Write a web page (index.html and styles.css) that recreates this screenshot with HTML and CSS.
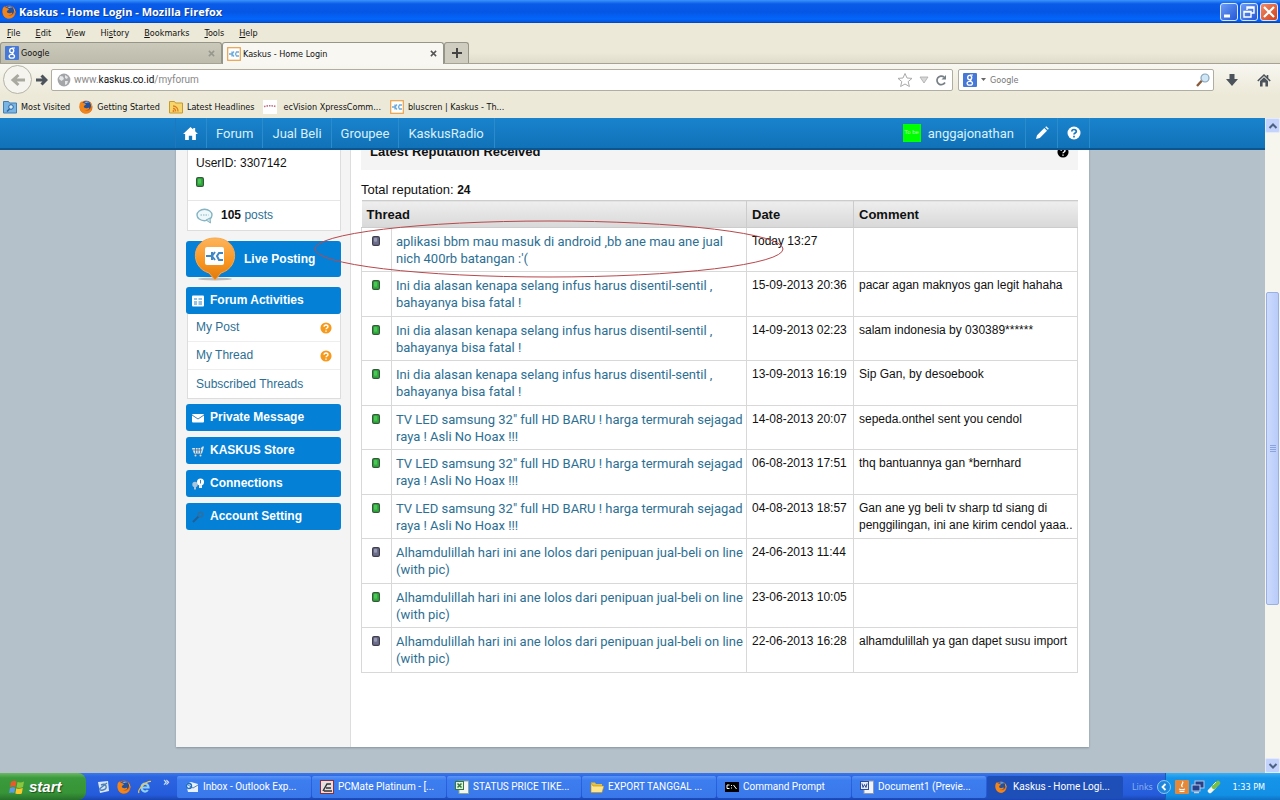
FILE: index.html
```html
<!DOCTYPE html>
<html lang="en">
<head>
<meta charset="utf-8">
<title>Kaskus - Home Login</title>
<link rel="stylesheet" href="styles.css">
</head>
<body>
<svg class="defs" aria-hidden="true">
  <linearGradient id="g-pin" x1="0" y1="0" x2="0" y2="1"><stop offset="0" stop-color="#fdb45c"/><stop offset=".6" stop-color="#f7941e"/><stop offset="1" stop-color="#e0780c"/></linearGradient>
  <symbol id="firefox" viewBox="0 0 16 16"><circle cx="8" cy="8" r="7.5" fill="#e06a12"/><circle cx="8.6" cy="6.4" r="5.2" fill="#24509c"/><path d="M6 2.5c2-1.5 5-1 6 .5-2-.5-3 .5-4 .5z" fill="#7fb4e8"/><path d="M.6 5C1 3 2 2 3 1.300c0 1 .4 1.700 1 2.200C5.500 3.400 7 4 8 5c-1 1-2.500 1-2.500 2.500S8 10 10 9c1-.5 2 0 1.500 1-1 1.500-3.500 2-5 1.500 3 2 7 1 8-4C15 12 12 15.500 8 15.500S0 12 .6 5z" fill="#f0851c"/><path d="M12.500 3c2 1.500 3 4 2.700 6-1-3-1.500-4-2.700-6z" fill="#fbc93d"/></symbol>
  <symbol id="google" viewBox="0 0 14 14"><rect width="14" height="14" rx="1" fill="#4678d8"/><ellipse cx="6.700" cy="4.600" rx="2" ry="2.200" fill="none" stroke="#fff" stroke-width="1.400"/><path d="M7 2h3M7 7l1.500 1.500" stroke="#fff" stroke-width="1.200"/><ellipse cx="6.800" cy="10.300" rx="2.700" ry="1.900" fill="none" stroke="#fff" stroke-width="1.300"/></symbol>
  <symbol id="kaskus" viewBox="0 0 14 14"><rect x=".7" y=".7" width="12.600" height="12.600" fill="#fff" stroke="#e9a04c" stroke-width="1.200"/><path d="M2 7h3M5 4.500v5M5 7l2-2.500M5 7l2 2.500M12 5H9.500L8.500 7l1 2H12" stroke="#6fabdc" stroke-width="1.300" fill="none"/></symbol>
  <symbol id="pip" viewBox="0 0 8 10"><rect x=".6" y=".6" width="6.800" height="8.800" rx="1.500" fill="#2fae3d" stroke="#35573a" stroke-width="1.200"/><rect x="2" y="1.800" width="3" height="5" rx="1" fill="#4cc658"/></symbol>
  <symbol id="pip-grey" viewBox="0 0 8 10"><rect x=".6" y=".6" width="6.800" height="8.800" rx="1.500" fill="#6d6e8c" stroke="#3e3e4e" stroke-width="1.200"/><rect x="2" y="1.800" width="3" height="4" rx="1" fill="#9a9ab4"/></symbol>
  <symbol id="help" viewBox="0 0 14 14"><circle cx="7" cy="7" r="6.500" fill="currentColor"/><path d="M4.800 5.600C4.800 2.800 9.300 2.800 9.300 5.500 9.300 7 7 7 7 8.500M7 9.800v1.600" fill="none" stroke="var(--mark)" stroke-width="1.700"/></symbol>
</svg>

<header class="titlebar">
  <svg class="i14"><use href="#firefox"/></svg>
  <h1 class="title">Kaskus - Home Login - Mozilla Firefox</h1>
  <button class="wbtn" aria-label="Minimize"><svg viewBox="0 0 16 16"><path d="M3 12h6" stroke="#fff" stroke-width="3"/></svg></button>
  <button class="wbtn" aria-label="Restore"><svg viewBox="0 0 16 16"><path d="M6 6V3h7v6h-3M6 4h7M3 7.500h7V13H3zM3 8h7" stroke="#fff" stroke-width="1.400" fill="none"/></svg></button>
  <button class="wbtn close" aria-label="Close"><svg viewBox="0 0 16 16"><path d="M3 3l10 10M13 3L3 13" stroke="#fff" stroke-width="2.200"/></svg></button>
</header>

<nav class="menubar">
  <button class="menu"><u>F</u>ile</button><button class="menu"><u>E</u>dit</button><button class="menu"><u>V</u>iew</button><button class="menu">Hi<u>s</u>tory</button><button class="menu"><u>B</u>ookmarks</button><button class="menu"><u>T</u>ools</button><button class="menu"><u>H</u>elp</button>
</nav>

<div class="tabs">
  <button class="tab"><svg class="i14"><use href="#google"/></svg><span class="tab-name">Google</span><svg class="x dim" viewBox="0 0 8 8"><path d="M1 1l6 6M7 1L1 7"/></svg></button>
  <button class="tab active"><svg class="i14"><use href="#kaskus"/></svg><span class="tab-name">Kaskus - Home Login</span><svg class="x" viewBox="0 0 8 8"><path d="M1 1l6 6M7 1L1 7"/></svg></button>
  <button class="newtab" aria-label="New tab"><svg class="i10" viewBox="0 0 10 10"><path d="M5 0v10M0 5h10" stroke="#444" stroke-width="2"/></svg></button>
</div>

<div class="navbar">
  <button class="back" aria-label="Back"><svg viewBox="0 0 16 16"><path d="M15 8H4M8.500 3L3 8l5.500 5" fill="none" stroke="#a9a9a2" stroke-width="3"/></svg></button>
  <button class="fwd" aria-label="Forward"><svg viewBox="0 0 12 12"><path d="M0 6h9M5.500 1.500L10 6l-4.500 4.500" fill="none" stroke="#4d535b" stroke-width="3"/></svg></button>
  <div class="urlbar">
    <svg class="i14" viewBox="0 0 14 14"><circle cx="7" cy="7" r="6.400" fill="#a3a5a8"/><path d="M3 3l3 .5L7 6 4.500 8 2 6zM8 2l3 2-1 2-2-1zM8 8l3 0-1 3-2 1z" fill="#e6e7e8"/></svg>
    <span class="url">www.<b>kaskus.co.id</b>/myforum</span>
    <svg class="star" viewBox="0 0 16 16"><path d="M8 1.500l2 4.500 5 .4-3.800 3.200L12.400 14.500 8 12l-4.400 2.500L4.800 9.600 1 6.400 6 6z" fill="#fff" stroke="#aaa"/></svg>
    <svg class="i10" viewBox="0 0 10 10"><path d="M1 2h8L5 8z" fill="#d8d8d8" stroke="#aaa" stroke-width=".8"/></svg>
    <svg class="i12" viewBox="0 0 12 12"><path d="M10 8.500A4.300 4.300 0 1 1 9 3" fill="none" stroke="#777f86" stroke-width="1.700"/><path d="M11 1v4.500H6.500z" fill="#777f86"/></svg>
  </div>
  <div class="search">
    <svg class="i14"><use href="#google"/></svg>
    <svg class="caret" viewBox="0 0 5 3"><path d="M0 0h5L2.500 3z" fill="#666"/></svg>
    <input class="search-input" type="text" placeholder="Google" aria-label="Search">
    <svg class="i14" viewBox="0 0 14 14"><path d="M1 13l5-5.500" stroke="#8a5a3a" stroke-width="2.400"/><circle cx="9" cy="5" r="4" fill="#cfe6f7" stroke="#8aa4b8" stroke-width="1.200"/></svg>
  </div>
  <button class="tool" aria-label="Downloads"><svg class="i14" viewBox="0 0 14 14"><path d="M4.500 1h5v5H13l-6 7-6-7h3.500z" fill="#4d535b"/></svg></button>
  <button class="tool" aria-label="Home"><svg class="i14" viewBox="0 0 14 14"><path d="M.8 8L7 2l6.200 6M10.500 2v3" fill="none" stroke="#4d535b" stroke-width="1.600"/><path d="M3 8l4-3.800L11 8v5.500H8.400V9.500H5.600v4H3z" fill="#4d535b"/></svg></button>
</div>

<nav class="bookmarks">
  <a class="bm" href="#"><svg class="i14" viewBox="0 0 14 14"><path d="M.5 1.500h5l1 1.500h7v10H.5z" fill="#78b4e4" stroke="#3f7fb8"/><circle cx="8" cy="7" r="2.300" fill="#d8edfc" stroke="#2b639c"/><path d="M6.500 9L4 11.500" stroke="#2b639c" stroke-width="1.500"/></svg>Most Visited</a>
  <a class="bm" href="#"><svg class="i14"><use href="#firefox"/></svg>Getting Started</a>
  <a class="bm" href="#"><svg class="i14" viewBox="0 0 14 14"><path d="M.5 1.500h5l1 1.500h7v10H.5z" fill="#f6d66c" stroke="#c79a2a"/><path d="M4 6a5 5 0 0 1 5 5.500M4 8.500a2.500 2.500 0 0 1 2.600 3" fill="none" stroke="#e07a1c" stroke-width="1.300"/><circle cx="4.500" cy="11" r="1" fill="#e07a1c"/></svg>Latest Headlines</a>
  <a class="bm wide" href="#"><svg class="i14" viewBox="0 0 14 14"><rect width="14" height="14" fill="#fff"/><path d="M1 6.500q6-1.500 12 0" fill="none" stroke="#c06a80" stroke-width="1.600" stroke-dasharray="1.500 1"/></svg>ecVision XpressComm...</a>
  <a class="bm" href="#"><svg class="i14"><use href="#kaskus"/></svg>bluscren | Kaskus - Th...</a>
</nav>

<main class="viewport">
  <div class="page">
    <header class="site">
      <nav class="site-in">
        <a class="nav home" href="#" aria-label="Home"><svg viewBox="0 0 16 14"><path d="M8 0L0 7.500h2.200V14h4V9.500h3.600V14h4V7.500H16L13 4.700V1h-2v1.800z" fill="#fff"/></svg></a>
        <a class="nav" href="#">Forum</a><a class="nav" href="#">Jual Beli</a><a class="nav" href="#">Groupee</a><a class="nav radio" href="#">KaskusRadio</a>
        <a class="user" href="#"><span class="avatar">To be</span>anggajonathan</a>
        <a class="nav sq" href="#" aria-label="Edit"><svg class="i14" viewBox="0 0 14 14"><path d="M1 13l1-3.800L9.300 2l2.700 2.700L4.800 12zM10.200 1.200l1-1L13.800 2.800l-1 1z" fill="#fff"/></svg></a>
        <a class="nav sq" href="#" aria-label="Help"><svg class="i14 h-white"><use href="#help"/></svg></a>
      </nav>
    </header>
    <div class="container">
      <aside class="side">
        <section class="profile">
          <div class="uid">UserID: 3307142<svg class="pip"><use href="#pip"/></svg></div>
          <div class="posts"><svg class="bubble" viewBox="0 0 18 16"><ellipse cx="8.500" cy="7" rx="7.500" ry="5.700" fill="#eef7fa" stroke="#86b4c2" stroke-width="1.400"/><path d="M10 12l4.500 3-.5-5z" fill="#c8e0e8" stroke="#86b4c2"/><path d="M4.500 7h8" stroke="#86b4c2" stroke-dasharray="1.500 1"/></svg><span><b>105</b> <a href="#">posts</a></span></div>
        </section>
        <a class="live" href="#"><svg class="pin" viewBox="0 0 44 44"><ellipse cx="22" cy="42" rx="17" ry="1.500" fill="#bbb"/><path d="M22 43l-6-7C-4 30-2 1 22 1s26 29 6 35z" fill="url(#g-pin)" stroke="#f9a648"/><rect x="12" y="10" width="19" height="18" rx="2" fill="#fff"/><path d="M13 19h6M19 15v8M19 19l3-4M19 19l3 4M30 16h-4l-2 3 2 4h4" stroke="#3f86c4" stroke-width="2" fill="none"/></svg>Live Posting</a>
        <section class="group">
          <h2 class="bar"><svg viewBox="0 0 12 12"><rect y=".5" width="12" height="11" rx="1" fill="#fff"/><path d="M2 4h3M2 7h3M2 9h3M6.500 4H10M6.500 7H10M6.500 9H10" stroke="#2b86c9" stroke-width="1.200"/></svg>Forum Activities</h2>
          <ul class="list">
            <li><a href="#">My Post</a><svg class="i12 h-orange"><use href="#help"/></svg></li>
            <li><a href="#">My Thread</a><svg class="i12 h-orange"><use href="#help"/></svg></li>
            <li><a href="#">Subscribed Threads</a></li>
          </ul>
        </section>
        <h2 class="bar"><svg viewBox="0 0 12 12"><rect y="2" width="12" height="8.500" rx="1" fill="#fff"/><path d="M0 3l6 4 6-4" fill="none" stroke="#3b83bd"/></svg>Private Message</h2>
        <h2 class="bar"><svg viewBox="0 0 12 12"><path d="M0 3h9l1.500-1.500H12L10 8.500H2z" fill="#d5e3ee"/><path d="M1 5h9M3.500 3v5M6 3v5M8.500 3v5M2 10h8" stroke="#3b7099" stroke-width=".8"/><circle cx="3.500" cy="10.500" r="1" fill="#ddd"/><circle cx="8.500" cy="10.500" r="1" fill="#ddd"/></svg>KASKUS Store</h2>
        <h2 class="bar"><svg viewBox="0 0 12 12"><circle cx="3" cy="6.500" r="2.700" fill="#a8c6dc"/><path d="M2 8h2v3.500H2z" fill="#a8c6dc"/><circle cx="8.500" cy="4" r="3.500" fill="#fff"/><path d="M7 7h3v3H7z" fill="#e8f0f6"/><path d="M8.500 2v3.500" stroke="#3b83bd"/></svg>Connections</h2>
        <h2 class="bar"><svg viewBox="0 0 12 12"><path d="M1 11l6-6" stroke="#1f5f96" stroke-width="2"/><circle cx="8.500" cy="3.500" r="2.300" fill="none" stroke="#2f6f9f" stroke-width="1.500"/></svg>Account Setting</h2>
      </aside>
      <section class="content">
        <h2 class="heading">Latest Reputation Received<svg class="i12 h-black"><use href="#help"/></svg></h2>
        <p class="total">Total reputation: <b>24</b></p>
        <div class="table-wrap">
        <table class="rep">
          <colgroup><col class="c-icon"><col><col class="c-date"><col class="c-comment"></colgroup>
          <thead><tr><th colspan="2">Thread</th><th>Date</th><th>Comment</th></tr></thead>
          <tbody>
            <tr><td><svg class="pip"><use href="#pip-grey"/></svg></td><td><a href="#">aplikasi bbm mau masuk di android ,bb ane mau ane jual<br>nich 400rb batangan :'(</a></td><td>Today 13:27</td><td></td></tr>
            <tr><td><svg class="pip"><use href="#pip"/></svg></td><td><a href="#">Ini dia alasan kenapa selang infus harus disentil-sentil ,<br>bahayanya bisa fatal !</a></td><td>15-09-2013 20:36</td><td>pacar agan maknyos gan legit hahaha</td></tr>
            <tr><td><svg class="pip"><use href="#pip"/></svg></td><td><a href="#">Ini dia alasan kenapa selang infus harus disentil-sentil ,<br>bahayanya bisa fatal !</a></td><td>14-09-2013 02:23</td><td>salam indonesia by 030389******</td></tr>
            <tr><td><svg class="pip"><use href="#pip"/></svg></td><td><a href="#">Ini dia alasan kenapa selang infus harus disentil-sentil ,<br>bahayanya bisa fatal !</a></td><td>13-09-2013 16:19</td><td>Sip Gan, by desoebook</td></tr>
            <tr><td><svg class="pip"><use href="#pip"/></svg></td><td><a href="#">TV LED samsung 32" full HD BARU ! harga termurah sejagad<br>raya ! Asli No Hoax !!!</a></td><td>14-08-2013 20:07</td><td>sepeda.onthel sent you cendol</td></tr>
            <tr><td><svg class="pip"><use href="#pip"/></svg></td><td><a href="#">TV LED samsung 32" full HD BARU ! harga termurah sejagad<br>raya ! Asli No Hoax !!!</a></td><td>06-08-2013 17:51</td><td>thq bantuannya gan *bernhard</td></tr>
            <tr><td><svg class="pip"><use href="#pip"/></svg></td><td><a href="#">TV LED samsung 32" full HD BARU ! harga termurah sejagad<br>raya ! Asli No Hoax !!!</a></td><td>04-08-2013 18:57</td><td>Gan ane yg beli tv sharp td siang di<br>penggilingan, ini ane kirim cendol yaaa..</td></tr>
            <tr><td><svg class="pip"><use href="#pip-grey"/></svg></td><td><a href="#">Alhamdulillah hari ini ane lolos dari penipuan jual-beli on line<br>(with pic)</a></td><td>24-06-2013 11:44</td><td></td></tr>
            <tr><td><svg class="pip"><use href="#pip"/></svg></td><td><a href="#">Alhamdulillah hari ini ane lolos dari penipuan jual-beli on line<br>(with pic)</a></td><td>23-06-2013 10:05</td><td></td></tr>
            <tr><td><svg class="pip"><use href="#pip-grey"/></svg></td><td><a href="#">Alhamdulillah hari ini ane lolos dari penipuan jual-beli on line<br>(with pic)</a></td><td>22-06-2013 16:28</td><td>alhamdulillah ya gan dapet susu import</td></tr>
          </tbody>
        </table>
        <svg class="ring" viewBox="0 0 470 58"><ellipse cx="235" cy="29" rx="234" ry="28" fill="none" stroke="#b8484c"/></svg>
        </div>
      </section>
    </div>
  </div>
  <div class="scroll">
    <button class="sbtn" aria-label="Scroll up"><svg class="i10" viewBox="0 0 10 10"><path d="M1.500 7L5 3.500 8.500 7" fill="none" stroke="#4d6185" stroke-width="2"/></svg></button>
    <div class="track above"></div>
    <div class="thumb"><i></i><i></i><i></i><i></i></div>
    <div class="track below"></div>
    <button class="sbtn" aria-label="Scroll down"><svg class="i10" viewBox="0 0 10 10"><path d="M1.500 3L5 6.500 8.500 3" fill="none" stroke="#4d6185" stroke-width="2"/></svg></button>
  </div>
</main>

<footer class="taskbar">
  <button class="start"><svg viewBox="0 0 16 16"><path d="M2 3q3-2 5.500-.5L6.500 8Q4 6.500 1 8.200z" fill="#e8592b"/><path d="M8.500 3q3 1.200 6.500-.5L14 8q-3 1.500-6.500.5z" fill="#8cc63f"/><path d="M1 9q3-1.500 5.300-.2L5.300 14Q3 12.800 0 14z" fill="#5a9be8"/><path d="M7.300 9.200q3 1.200 6.500-.2l-1 5.500q-3 1.200-6.500 0z" fill="#fbc72b"/></svg>start</button>
  <div class="quick">
    <svg class="i14" viewBox="0 0 14 14"><path d="M2 2l10-1 1 10-9 2z" fill="#d9e6f5"/><path d="M4 8.500L11 3M5 5q4-2 5 1t-3 4-3-2" stroke="#4d7fb8" stroke-width="1.400" fill="none"/></svg>
    <svg class="i14"><use href="#firefox"/></svg>
    <svg class="i14" viewBox="0 0 14 14"><path d="M3.500 7.500h7A3.500 4 0 1 0 9.800 10" fill="none" stroke="#8fd0f8" stroke-width="2.200"/><path d="M1 13C-1 10 8 1 13 1.500" fill="none" stroke="#f2c744" stroke-width="1.200"/></svg>
    <span class="more">»</span>
  </div>
  <button class="task"><svg class="i14" viewBox="0 0 14 14"><path d="M1 4l5-2 7 2v8H3z" fill="#e9f1fa"/><path d="M3 5l5 3 5-3" stroke="#5c86b8" fill="none"/><circle cx="4" cy="6" r="2.500" fill="none" stroke="#1d6fc4" stroke-width="1.400"/></svg><span>Inbox - Outlook Exp...</span></button>
  <button class="task"><svg class="i14" viewBox="0 0 14 14"><rect x=".5" y=".5" width="13" height="13" fill="#e5dfe2" stroke="#8c2d3a"/><path d="M3 11l4-7h4M6 8h5M4 11h8" stroke="#333" stroke-width="1.500" fill="none"/></svg><span>PCMate Platinum - [...</span></button>
  <button class="task"><svg class="i14" viewBox="0 0 14 14"><rect x="4" y="1" width="9.500" height="12.500" fill="#f4f6f4" stroke="#8a9"/><rect x=".5" y="1.500" width="8" height="8" fill="#dff0df" stroke="#2f7a38"/><path d="M2.500 3.500l4 4M6.500 3.500l-4 4" stroke="#2f7a38" stroke-width="1.500"/></svg><span>STATUS PRICE TIKE...</span></button>
  <button class="task"><svg class="i14" viewBox="0 0 14 14"><path d="M1 2.500h4l1 1.500h6v3H1z" fill="#e8c03a"/><path d="M1 12.500V3L3 6h11l-2 6.500z" fill="#fce58a" stroke="#b58d1f" stroke-width=".6"/></svg><span>EXPORT TANGGAL ...</span></button>
  <button class="task"><svg class="i14" viewBox="0 0 14 14"><rect y="2" width="14" height="10" fill="#000"/><path d="M4.500 5H2v3.500h2.500M6.500 5v1M6.500 7.500v1M8.500 5l3 4" fill="none" stroke="#fff"/></svg><span>Command Prompt</span></button>
  <button class="task"><svg class="i14" viewBox="0 0 14 14"><rect x="4" y="1" width="9.500" height="12.500" fill="#f0f3f8" stroke="#8a9ab5"/><rect x=".5" y="1.500" width="8" height="8" fill="#e4ecf8" stroke="#2b4c9a"/><path d="M2 3.500l1 4 1.500-3L6 7.500l1-4" stroke="#2b4c9a" fill="none"/></svg><span>Document1 (Previe...</span></button>
  <button class="task on"><svg class="i12"><use href="#firefox"/></svg><span>Kaskus - Home Logi...</span></button>
  <span class="links">Links</span>
  <div class="tray">
    <svg class="chev" viewBox="0 0 14 14"><circle cx="7" cy="7" r="6.500" fill="#1f86dc" stroke="#8ec8f6"/><path d="M8.500 4L5.500 7l3 3" stroke="#fff" stroke-width="1.800" fill="none"/></svg>
    <svg class="i14" viewBox="0 0 14 14"><rect width="14" height="14" rx="1" fill="#e4893a"/><path d="M7.500 1.500c2 2-3 3 0 5.500M4 9q3 1.500 6 0M4.500 11q2.500 1 5 0" stroke="#fff" fill="none" stroke-width="1.200"/></svg>
    <svg class="i14" viewBox="0 0 14 14"><rect x="4" y="1" width="9" height="7" fill="#26418a" stroke="#b8c8e4"/><rect x="1" y="5" width="8" height="6" fill="#26418a" stroke="#b8c8e4"/><path d="M3 12.500h5" stroke="#ccd" stroke-width="1.500"/></svg>
    <svg class="i14" viewBox="0 0 14 14"><path d="M3 11l4-4" stroke="#f4f4ea" stroke-width="4.500" stroke-linecap="round"/><path d="M7 7l4-4" stroke="#7ac143" stroke-width="4.500" stroke-linecap="round"/><path d="M6 5l3-3" stroke="#d7f2b8"/></svg>
    <time class="clock">1:33 PM</time>
  </div>
</footer>
</body>
</html>
```
FILE: styles.css
```css
:root {
  --ui: "DejaVu Sans Condensed", "DejaVu Sans", sans-serif;
  --web: "Liberation Sans", Arial, sans-serif;
  --link: Roboto, "Liberation Sans", sans-serif;
}
* { box-sizing: border-box; }
body {
  margin: 0;
  height: 100vh;
  overflow: hidden;
  display: flex;
  flex-direction: column;
  font: 9px/14px var(--ui);
  color: #111;
  background: #ece9d8;
}
button { font: inherit; color: inherit; margin: 0; padding: 0; border: 0; background: none; }
a { color: inherit; text-decoration: none; }
svg { display: block; flex: none; }
h1, h2, p, ul { margin: 0; padding: 0; }
.defs { position: absolute; width: 0; height: 0; }
.i10 { width: 10px; height: 10px; }
.i12 { width: 12px; height: 12px; }
.i14 { width: 14px; height: 14px; }

/* window chrome */
.titlebar {
  flex: none; height: 23px; padding: 0 2px; display: flex; align-items: center; gap: 2px;
  background: linear-gradient(#3a94fb 0, #0a5be8 4px, #0556e4 12px, #0366fb 19px, #0354dd 22px, #0240a8);
  color: #fff;
}
.title { flex: 1; font: bold 11px/20px "Open Sans", sans-serif; text-shadow: 1px 1px #123c92; margin-left: 1px; }
.wbtn { width: 18px; height: 18px; border: 1px solid #dbe6fb; border-radius: 3px; background: linear-gradient(135deg, #6b9cf6, #2457d6); }
.wbtn svg { width: 16px; height: 16px; }
.wbtn.close { background: linear-gradient(135deg, #f08a68, #d0421c); }
.menubar { flex: none; height: 19px; display: flex; align-items: center; gap: 15px; padding: 0 7px; }
.tabs {
  flex: none; height: 22px; display: flex;
  background: linear-gradient(#ece9d8 50%, #dfdccb); border-bottom: 1px solid #a5a394;
}
.tab {
  width: 222px; height: 21px; padding: 0 6px 0 4px; display: flex; align-items: center; gap: 2px; text-align: left;
  background: linear-gradient(#cbc9ba, #bdbbac); border: 1px solid #96958a; border-bottom: 0; border-radius: 3px 3px 0 0;
}
.tab.active { height: 22px; background: #f8f7f2; }
.tab-name { flex: 1; }
.x { width: 7px; height: 7px; stroke: #555; stroke-width: 1.7; }
.x.dim { stroke: #98978d; }
.newtab { width: 25px; display: grid; place-items: center; background: #cfcdbf; border: 1px solid #96958a; border-bottom: 0; border-radius: 3px 3px 0 0; }
.navbar { flex: none; height: 31px; display: flex; align-items: center; padding: 0 9px 0 3px; background: linear-gradient(#f8f7f1, #ece9d8); }
.back { width: 29px; height: 29px; border: 1px solid #b5b3a6; border-radius: 50%; display: grid; place-items: center; background: #f5f4ee; }
.back svg { width: 16px; height: 16px; }
.fwd { width: 19px; display: grid; place-items: center; }
.fwd svg { width: 12px; height: 12px; }
.urlbar, .search { height: 22px; display: flex; align-items: center; background: #fff; border: 1px solid #b0aea2; border-radius: 2px; }
.urlbar { flex: 1; gap: 6px; padding: 0 5px; }
.url { flex: 1; color: #888; margin-left: -3px; font: 10px/14px var(--link); }
.url b { font-weight: normal; color: #111; }
.star { width: 16px; height: 16px; }
.search { width: 256px; margin: 0 11px 0 5px; padding: 0 3px 0 4px; gap: 4px; }
.caret { width: 5px; height: 3px; }
.search-input { flex: 1; min-width: 0; border: 0; padding: 0; outline: 0; font: inherit; background: none; }
.search-input::placeholder { color: #777; opacity: 1; }
.tool + .tool { margin-left: 18px; }
.bookmarks { flex: none; height: 23px; display: flex; align-items: center; gap: 9px; padding: 0 3px; }
.bm { display: flex; align-items: center; gap: 4px; white-space: nowrap; }
.bm.wide { gap: 6px; }

/* browser viewport */
.viewport { flex: 1; min-height: 0; display: flex; }
.page { flex: 1; min-width: 0; display: flex; flex-direction: column; background: #b5c1ca; overflow: hidden; font: 12px/17px var(--web); }
.site { flex: none; z-index: 1; border-bottom: 2px solid #0b5690; background: linear-gradient(#1983cd, #1172b8); }
.site-in { max-width: 915px; height: 30px; margin: 0 auto; display: flex; color: #d9f0fb; font: 13px/17px var(--link); border-left: 1px solid #1d79bb; }
.nav { padding: 0 9px; display: flex; align-items: center; border-right: 1px solid #2b8ccb; }
.home { padding: 0 8px 0 7px; }
.home svg { width: 15px; height: 13px; }
.nav.radio { margin-right: auto; padding-right: 10px; }
.sq { width: 32px; justify-content: center; padding: 0; }
.user { display: flex; align-items: center; gap: 7px; padding-right: 11px; border-right: 1px solid #2b8ccb; }
.avatar { width: 18px; height: 18px; background: #0f0; color: #b6ffb0; font: 6px/16px var(--web); text-align: center; }
.h-white { color: #fff; --mark: #1678bf; }
.h-orange { color: #f59a1c; --mark: #fff; }
.h-black { color: #000; --mark: #fff; }
.container { width: 100%; max-width: 913px; margin: -16px auto 26px; flex: 1; min-height: 0; display: flex; background: #fff; box-shadow: 0 1px 2px #8593a0; }
.side { flex: none; width: 175px; padding: 0 9px 0 10px; background: #f4f4f4; border-right: 1px solid #ddd; }
.profile { background: #fff; border: 1px solid #ddd; border-width: 0 1px 1px; margin-left: 1px; }
.uid { padding: 21px 8px 13px; border-bottom: 1px solid #e6e6e6; }
.uid .pip { margin-top: 5px; }
.pip { width: 8px; height: 10px; }
.posts { padding: 6px 8px; display: flex; align-items: center; gap: 7px; }
.bubble { width: 18px; height: 16px; }
.posts a, .list a, .rep a { color: #2d6f93; }
.live {
  position: relative; display: flex; align-items: center; height: 36px; margin: 10px 0; padding-left: 58px;
  background: #0480d6; border-radius: 3px; color: #fff; font: bold 12px/17px var(--web);
}
.pin { position: absolute; left: 7px; top: -4px; width: 44px; height: 44px; }
.bar { height: 27px; margin-bottom: 6px; padding: 0 6px; display: flex; align-items: center; gap: 6px; background: #0480d6; border-radius: 3px; color: #fff; font: bold 12px/17px var(--web); }
.bar svg { width: 12px; height: 12px; }
.group { margin-bottom: 5px; }
.group .bar { margin: 0; }
.list { list-style: none; margin-left: 1px; background: #fff; border: 1px solid #ddd; border-top: 0; }
.list li { height: 28px; padding: 0 8px; display: flex; align-items: center; justify-content: space-between; border-bottom: 1px solid #eee; }
.list li:last-child { border: 0; }
.content { flex: 1; min-width: 0; padding: 0 11px 0 10px; }
.heading { height: 36px; padding: 9px 9px; display: flex; justify-content: space-between; background: #f4f4f4; font: bold 13px/17px var(--web); }
.heading svg { margin-top: 3px; }
.total { padding: 11px 0 1px; font: 13px/17px var(--web); }
.total b { font-size: 12px; }
.table-wrap { position: relative; }
.rep { width: 100%; table-layout: fixed; border-collapse: collapse; }
.c-icon { width: 30px; }
.c-date { width: 107px; }
.c-comment { width: 224px; }
.rep th { height: 27px; padding: 0 5px; text-align: left; font: bold 13px/17px var(--web); background: linear-gradient(#eee, #d8d8d8); border: 1px solid #ccc; border-width: 1px 0 1px; }
.rep th + th { border-left-width: 1px; }
.rep td { padding: 5px 5px 4px; vertical-align: top; border: 1px solid #d8d8d8; }
.rep tr:nth-child(even) td { padding-bottom: 5px; }
.rep td:first-child { padding-left: 10px; }
.rep td:last-child { padding-right: 0; }
.rep td .pip { margin-top: 3px; }
.rep td:nth-child(2) { font: 13px/17px var(--link); white-space: nowrap; padding-left: 4px; }
.ring { position: absolute; left: -47px; top: 20px; width: 470px; height: 58px; }

/* scroll bar */
.scroll { flex: none; width: 15px; display: flex; flex-direction: column; background: #f6f5ee; }
.sbtn { height: 15px; display: grid; place-items: center; background: #c3d3fb; border: 1px solid #e2eafc; border-radius: 2px; }
.above { flex: 160; }
.thumb { flex: 312; margin: 0 1px; background: linear-gradient(90deg, #cbdafd, #b9cbf9); border: 1px solid #98b0e8; border-radius: 2px; display: flex; flex-direction: column; align-items: center; justify-content: center; gap: 1px; }
.thumb i { width: 6px; height: 1px; background: #8ba4e0; }
.below { flex: 154; }

/* task bar */
.taskbar { flex: none; height: 27px; display: flex; align-items: stretch; color: #fff; background: linear-gradient(#3a78ea, #2c64e0 4px, #245bdb 22px, #1a45b0); }
.start {
  width: 86px; display: flex; align-items: center; gap: 4px; padding-left: 9px; border-radius: 0 8px 8px 0;
  background: linear-gradient(#6cb866, #3a9a3c 5px, #379437 20px, #26702a);
  font: italic bold 15px/20px "Liberation Sans", sans-serif; text-shadow: 1px 1px 1px #1f4d1f;
}
.start svg { width: 16px; height: 16px; }
.quick { width: 91px; padding-left: 10px; display: flex; align-items: center; gap: 7px; }
.more { font-size: 12px; margin: -10px 0 0 4px; }
.task {
  flex: 0 1 134px; min-width: 0; margin: 3px 1px 2px 0; padding: 0 8px; display: flex; align-items: center; gap: 4px; white-space: nowrap; overflow: hidden;
  background: linear-gradient(#5a94f6, #3c7df0 4px, #3a78ea); border-radius: 2px; font: 10px/14px var(--link);
}
.task.on { background: #1e4fb8; flex-basis: 136px; gap: 6px; }
.links { color: #8db0f0; align-self: center; margin: 0 auto 0 8px; }
.tray { width: 115px; display: flex; align-items: center; gap: 2px; padding-right: 15px; background: linear-gradient(#3ab0f4, #1694ea 5px, #1190e6 22px, #0f72c4); border-left: 1px solid #0f5fb4; }
.chev { width: 14px; height: 14px; margin-left: -9px; }
.chev + svg { margin-left: 2px; }
.clock { margin-left: auto; white-space: nowrap; }
```
